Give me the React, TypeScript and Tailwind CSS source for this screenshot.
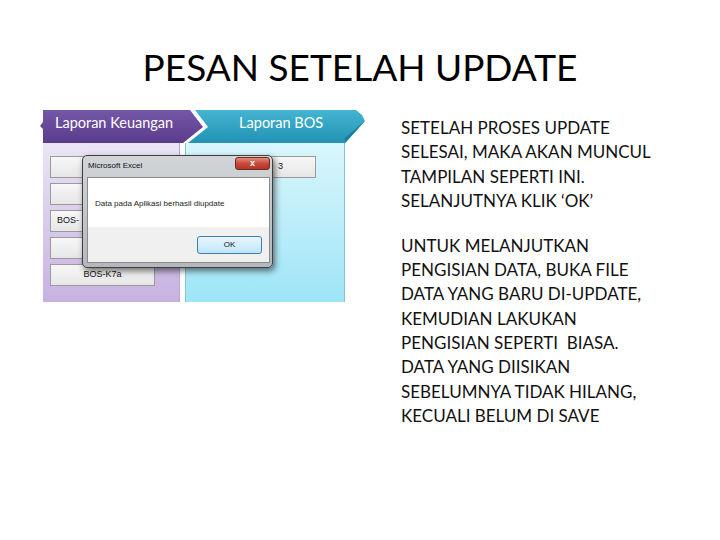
import React from "react";

const lines1 = [
  "SETELAH PROSES UPDATE",
  "SELESAI, MAKA AKAN MUNCUL",
  "TAMPILAN SEPERTI INI.",
  "SELANJUTNYA KLIK ‘OK’",
];
const lines2 = [
  "UNTUK MELANJUTKAN",
  "PENGISIAN DATA, BUKA FILE",
  "DATA YANG BARU DI-UPDATE,",
  "KEMUDIAN LAKUKAN",
  "PENGISIAN SEPERTI  BIASA.",
  "DATA YANG DIISIKAN",
  "SEBELUMNYA TIDAK HILANG,",
  "KECUALI BELUM DI SAVE",
];

function Btn({ label, className = "" }: { label: string; className?: string }) {
  return (
    <div
      className={
        "h-[22px] w-[105px] flex items-center justify-center border border-[#9a9a9a] bg-gradient-to-b from-[#f7f7f7] to-[#e6e6e6] text-[9px] text-[#111] [font-family:'Liberation_Sans',sans-serif] " +
        className
      }
    >
      {label}
    </div>
  );
}

function Picture() {
  return (
    <div className="relative w-[325px] h-[200px] shrink-0">
      <div className="h-[38px] pt-[5px]">
        <div className="relative h-[33px]">
          <svg className="absolute inset-0" width="325" height="33" viewBox="0 0 325 33">
            <defs>
              <linearGradient id="pg" x1="0" y1="0" x2="0" y2="1">
                <stop offset="0" stopColor="#7457a6" />
                <stop offset="1" stopColor="#5b3b8c" />
              </linearGradient>
              <linearGradient id="tg" x1="0" y1="0" x2="0" y2="1">
                <stop offset="0" stopColor="#45b4d2" />
                <stop offset="1" stopColor="#2192b3" />
              </linearGradient>
            </defs>
            <polygon points="3,0 150,0 163,17 143,33 3,33 3,19 0,16 3,12" fill="url(#pg)" />
            <polygon points="155,0 316,0 322,5 325,11 305,33 148,33 168,17" fill="url(#tg)" />
            <polygon points="325,11 305,33 305,28" fill="#1a7d9c" />
          </svg>
          <div className="relative flex h-[33px] items-start pt-[2px] text-white text-[14.5px] [font-family:Lato,sans-serif]">
            <span className="ml-[15px]">Laporan Keuangan</span>
            <span className="ml-[66px]">Laporan BOS</span>
          </div>
        </div>
      </div>
      <div className="flex h-[159px]">
        <div className="ml-[3px] w-[137px] flex flex-col gap-[5px] pt-[13px] pl-[7px] bg-gradient-to-b from-[#ebe5f4] to-[#c6b2e2] border-r border-[#b8a8d4]">
          <Btn label="" />
          <Btn label="" />
          <Btn label="BOS-" className="justify-start pl-[6px]" />
          <Btn label="" />
          <Btn label="BOS-K7a" />
        </div>
        <div className="ml-[5px] w-[160px] pt-[13px] pl-[10px] bg-gradient-to-b from-[#d9f6fc] to-[#9de5f7] border-x border-[#8cc4d4]">
          <div className="h-[22px] w-[120px] flex items-center justify-end pr-[32px] border border-[#9a9a9a] bg-gradient-to-b from-[#f7f7f7] to-[#e6e6e6] text-[9px] text-[#111] [font-family:'Liberation_Sans',sans-serif]">
            3
          </div>
        </div>
      </div>

      <div className="absolute left-[42px] top-[50px] w-[191px] h-[113px] rounded-[5px] border border-[#3f3f3f] bg-gradient-to-b from-[#d2d5d8] to-[#b4b8bd] shadow-[2px_3px_6px_rgba(0,0,0,0.55)] flex flex-col [font-family:'Liberation_Sans',sans-serif]">
        <div className="h-[21px] flex items-start justify-between pl-[5px] pr-[2px]">
          <span className="mt-[4px] text-[8px] text-[#111]">Microsoft Excel</span>
          <div className="mt-[1px] w-[35px] h-[13px] rounded-[3px] border border-[#6b2a20] bg-gradient-to-b from-[#e38a7c] via-[#c8493a] to-[#b23526] flex items-center justify-center text-white text-[9px] font-bold leading-none">
            x
          </div>
        </div>
        <div className="ml-[4px] mr-[2px] h-[86px] border border-[#8a8a8a] flex flex-col">
          <div className="h-[49px] bg-white flex items-center pl-[7px] pt-[2px] text-[8px] text-[#222]">
            Data pada Aplikasi berhasil diupdate
          </div>
          <div className="flex-1 bg-[#f0f0f0] flex justify-end pt-[9px] pr-[7px]">
            <div className="w-[65px] h-[18px] rounded-[3px] border border-[#3c7fb1] bg-gradient-to-b from-[#eaf6fd] to-[#bee6fd] flex items-center justify-center text-[8px] text-[#111]">
              OK
            </div>
          </div>
        </div>
      </div>
    </div>
  );
}

export default function App() {
  return (
    <div className="w-[720px] h-[540px] bg-white overflow-hidden [font-family:Lato,sans-serif]">
      <h1 className="pt-[42px] h-[105px] text-center text-[37px] leading-[50px] text-black">
        PESAN SETELAH UPDATE
      </h1>
      <div className="flex">
        <div className="ml-[40px]">
          <Picture />
        </div>
        <div className="ml-[36px] mt-[11px] text-[17px] leading-[24.3px] text-[#111]">
          {lines1.map((l) => (
            <div key={l} className="whitespace-pre">{l}</div>
          ))}
          <div className="h-[20.7px]" />
          {lines2.map((l) => (
            <div key={l} className="whitespace-pre">{l}</div>
          ))}
        </div>
      </div>
    </div>
  );
}
